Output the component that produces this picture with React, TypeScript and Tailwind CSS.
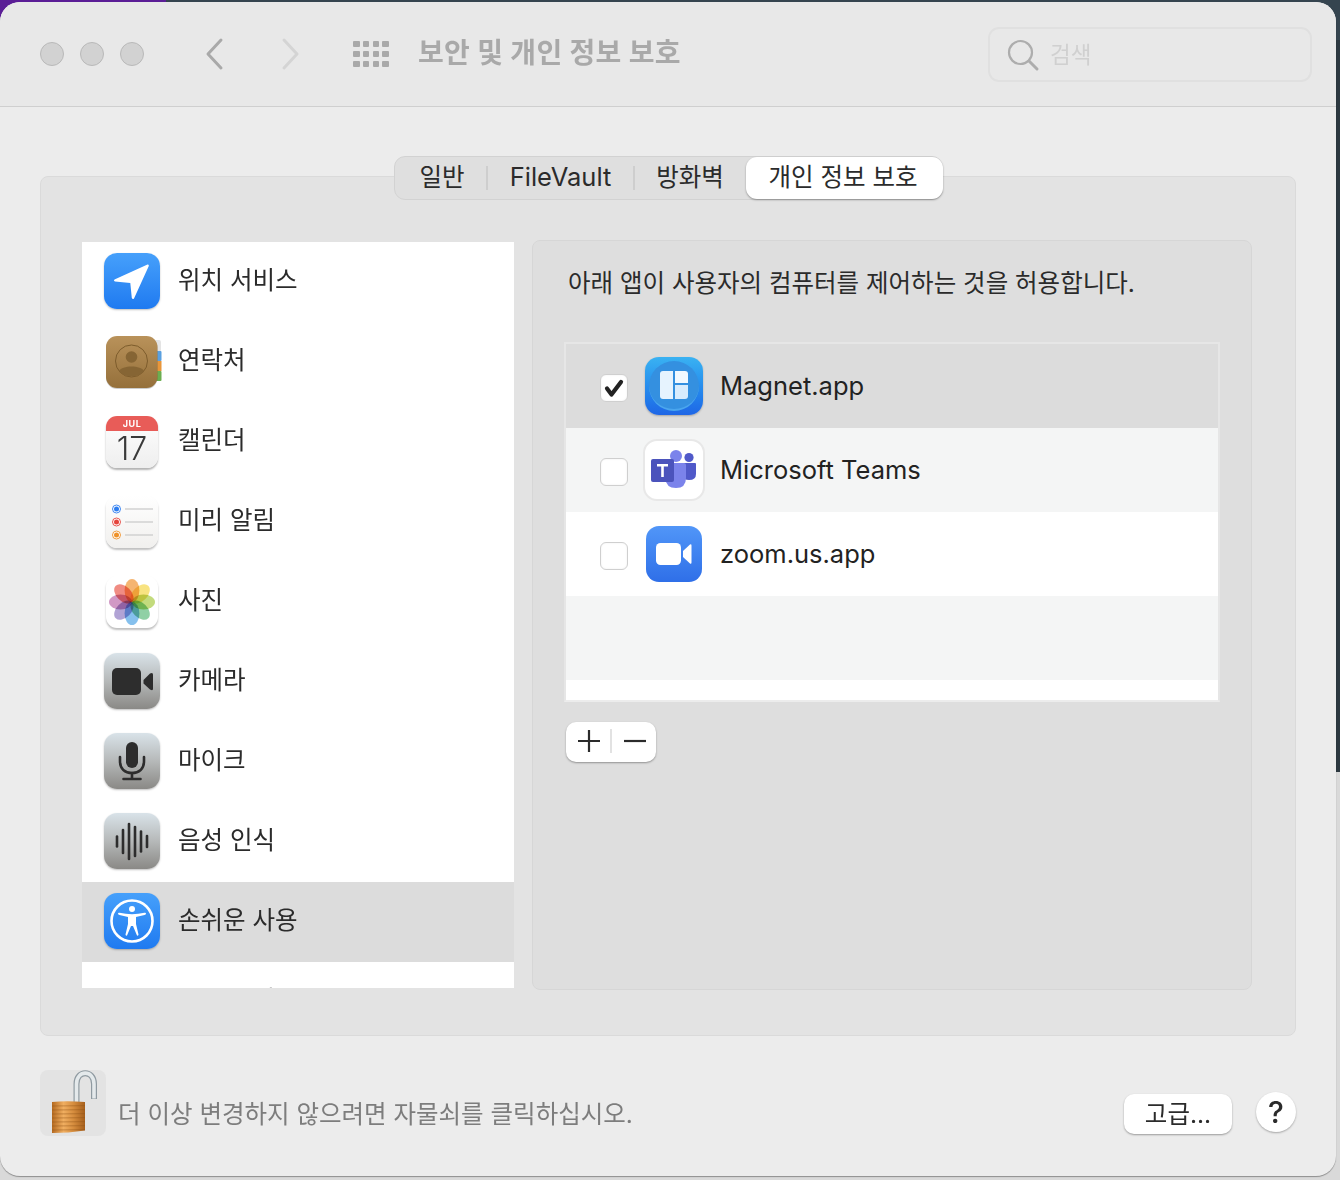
import React from "react";

const font = { fontFamily: '"Inter", "Noto Sans CJK KR", sans-serif' };

function Squircle({ className, children }: { className: string; children?: React.ReactNode }) {
  return (
    <div className={`w-14 h-14 rounded-[13px] flex items-center justify-center shadow-[0_1px_2px_rgba(0,0,0,0.25)] ${className}`}>
      {children}
    </div>
  );
}

const blue = "bg-gradient-to-b from-[#46a0fb] to-[#1f7af0]";
const gray = "bg-gradient-to-b from-[#d9e3e9] via-[#b6b9b9] to-[#8a8986]";

const LocationIcon = () => (
  <Squircle className={blue}>
    <svg width="56" height="56" viewBox="0 0 56 56">
      <path d="M43.5 11.5 L10.5 26.5 Q9 27.8 11 28.6 L26.3 30 L27.8 45 Q28.8 47 30 45.4 L44.8 13 Q45 11 43.5 11.5 Z" fill="#fff" />
    </svg>
  </Squircle>
);

const ContactsIcon = () => (
  <div className="w-14 h-14 flex items-center justify-center pt-[2px]">
    <svg width="56" height="56" viewBox="0 0 56 56" className="overflow-visible">
      <defs>
        <linearGradient id="ct" x1="0" y1="0" x2="0" y2="1">
          <stop offset="0" stopColor="#b9925a" />
          <stop offset="1" stopColor="#95703b" />
        </linearGradient>
      </defs>
      <rect x="46" y="6" width="11" height="12" rx="2" fill="#e4e4e4" />
      <rect x="50" y="17" width="7.5" height="10" rx="1" fill="#5aa0e0" />
      <rect x="50" y="27" width="7.5" height="10" fill="#e8963a" />
      <rect x="50" y="37" width="7.5" height="10" rx="1" fill="#6cae50" />
      <rect x="2" y="3" width="51.5" height="52" rx="11" fill="#00000033" />
      <rect x="2" y="2" width="51.5" height="52" rx="11" fill="url(#ct)" />
      <circle cx="27.5" cy="27" r="16" fill="none" stroke="#7d5c2c" strokeWidth="1" />
      <circle cx="27.5" cy="23" r="5.8" fill="#866534" />
      <path d="M15 37 C18 31 37 31 40 37 C36 44 19 44 15 37 Z" fill="#866534" />
    </svg>
  </div>
);

const CalendarIcon = () => (
  <div className="w-14 h-14 flex items-center justify-center pt-[2px]">
    <div className="w-[52px] h-[52px] rounded-[11px] overflow-hidden flex flex-col bg-gradient-to-b from-white to-[#eeeeee] shadow-[0_2px_2px_rgba(0,0,0,0.3)]">
      <div className="h-[15px] bg-[#e85c58] flex items-center justify-center text-white text-[9px] font-bold tracking-[0.5px] leading-none">JUL</div>
      <div className="flex-1 flex items-center justify-center text-[32px] leading-none text-[#3a3a3a] font-light pb-[1px]">17</div>
    </div>
  </div>
);

const RemindersIcon = () => {
  const rows: [number, string][] = [[13, "#2c7df0"], [26, "#e5443c"], [39, "#ee922a"]];
  return (
    <div className="w-14 h-14 flex items-center justify-center pt-[2px]">
      <div className="w-[52px] h-[52px] rounded-[11px] bg-gradient-to-b from-white to-[#f1f0ee] shadow-[0_2px_2px_rgba(0,0,0,0.25)]">
        <svg width="52" height="52" viewBox="0 0 52 52">
          {rows.map(([y, c]) => (
            <g key={y}>
              <circle cx="10.5" cy={y} r="4" fill="#fff" stroke={c} strokeWidth="0.9" />
              <circle cx="10.5" cy={y} r="2.5" fill={c} />
              <rect x="19" y={y - 0.7} width="28" height="1.4" fill="#cfcfcf" />
            </g>
          ))}
        </svg>
      </div>
    </div>
  );
};

const PhotosIcon = () => {
  const petals = ["#f2a24e", "#f6dc62", "#b4d25c", "#74c48e", "#66b0e8", "#9d8ccb", "#c680b6", "#ec6f64"];
  return (
    <div className="w-14 h-14 flex items-center justify-center pt-[2px]">
      <div className="w-[52px] h-[52px] rounded-[11px] bg-white shadow-[0_2px_2px_rgba(0,0,0,0.25)]">
        <svg width="52" height="52" viewBox="0 0 52 52">
          {petals.map((c, i) => (
            <ellipse key={c} className="mix-blend-multiply" cx="26" cy="14.5" rx="7.4" ry="11.5" fill={c} fillOpacity="0.8" transform={`rotate(${i * 45} 26 26)`} />
          ))}
        </svg>
      </div>
    </div>
  );
};

const CameraGlyph = () => (
  <svg width="56" height="56" viewBox="0 0 56 56">
    <rect x="8" y="15" width="29" height="27" rx="5" fill="#2d2d2d" />
    <path d="M39.5 27 L46 20.5 Q49 19 49 21.5 L49 36 Q49 38 46 36.5 L39.5 30.5 Z" fill="#2d2d2d" />
  </svg>
);

const MicGlyph = () => (
  <svg width="56" height="56" viewBox="0 0 56 56" fill="none" stroke="#2d2d2d" strokeLinecap="round">
    <rect x="22" y="9" width="12" height="26" rx="6" fill="#2d2d2d" stroke="none" />
    <path d="M16 24 V28 C16 36 21 40 28 40 C35 40 40 36 40 28 V24" strokeWidth="2.6" />
    <path d="M28 40 V46 M19.5 46 H36.5" strokeWidth="2.6" />
  </svg>
);

const VoiceGlyph = () => {
  const bars: [number, number][] = [[13, 10], [19, 23], [25, 35], [31, 29], [37, 20], [43, 11]];
  return (
    <svg width="56" height="56" viewBox="0 0 56 56" stroke="#2d2d2d" strokeWidth="2.6" strokeLinecap="round">
      {bars.map(([x, h]) => (
        <line key={x} x1={x} x2={x} y1={28.5 - h / 2} y2={28.5 + h / 2} />
      ))}
    </svg>
  );
};

const AccessGlyph = () => (
  <svg width="56" height="56" viewBox="0 0 56 56">
    <circle cx="28" cy="28" r="20.5" fill="none" stroke="#fff" strokeWidth="2.6" />
    <circle cx="28" cy="16" r="3" fill="#fff" />
    <path d="M14 20.5 Q14 19.5 15.5 19.8 Q28 22.5 40.5 19.8 Q42 19.5 42 20.5 Q42 21.8 40.5 22 L32 24 L32 31 L34.5 41.5 Q34.5 43 33 42.5 L29 33 L27 33 L23 42.5 Q21.5 43 21.5 41.5 L24 31 L24 24 L15.5 22 Q14 21.8 14 20.5 Z" fill="#fff" />
  </svg>
);

const items: { label: string; icon: React.ReactNode; selected?: boolean }[] = [
  { label: "위치 서비스", icon: <LocationIcon /> },
  { label: "연락처", icon: <ContactsIcon /> },
  { label: "캘린더", icon: <CalendarIcon /> },
  { label: "미리 알림", icon: <RemindersIcon /> },
  { label: "사진", icon: <PhotosIcon /> },
  { label: "카메라", icon: <Squircle className={gray}><CameraGlyph /></Squircle> },
  { label: "마이크", icon: <Squircle className={gray}><MicGlyph /></Squircle> },
  { label: "음성 인식", icon: <Squircle className={gray}><VoiceGlyph /></Squircle> },
  { label: "손쉬운 사용", icon: <Squircle className={blue}><AccessGlyph /></Squircle>, selected: true },
  { label: "입력 모니터링", icon: <div className="w-14 h-14" /> },
];

const MagnetIcon = () => (
  <div className="w-[58px] h-[58px] rounded-[14px] bg-gradient-to-b from-[#3ab2f2] to-[#1f66e6] flex items-center justify-center shadow-[0_1px_2px_rgba(0,0,0,0.25)]">
    <div className="w-[50px] h-[50px] rounded-full bg-[#3490e0] flex items-center justify-center border-b-2 border-[#4aa6ee]">
      <svg width="28" height="28" viewBox="0 0 28 28">
        <path d="M3 0 H13 V28 H3 Q0 28 0 25 V3 Q0 0 3 0 Z" fill="#e6f3fe" />
        <path d="M15 0 H25 Q28 0 28 3 V12 H15 Z" fill="#f2f9ff" />
        <path d="M15 14 H28 V25 Q28 28 25 28 H15 Z" fill="#d8ecfd" />
      </svg>
    </div>
  </div>
);

const TeamsIcon = () => (
  <div className="w-[62px] h-[62px] rounded-[14px] bg-white border-2 border-[#e8e8e8] flex items-center justify-center">
    <svg width="46" height="40" viewBox="0 0 46 40">
      <circle cx="25" cy="6" r="6" fill="#7b83eb" />
      <circle cx="38" cy="7.5" r="4.6" fill="#5059c9" />
      <path d="M31 13 H44 Q45 13 45 14 V24 Q45 30 38 30 Q33 30 31 27 Z" fill="#5059c9" />
      <path d="M14 13 H33 Q35 13 35 15 V28 Q35 38 25 38 Q15 38 14 28 Z" fill="#7b83eb" />
      <rect x="0" y="9" width="23" height="23" rx="2" fill="#4b53bc" />
      <path d="M6 14 H17 V16.4 H12.8 V27 H10.2 V16.4 H6 Z" fill="#fff" />
    </svg>
  </div>
);

const ZoomIcon = () => (
  <div className="w-14 h-14 rounded-[13px] bg-gradient-to-b from-[#5196f8] to-[#2f6fe8] flex items-center justify-center">
    <svg width="36" height="22" viewBox="0 0 36 22">
      <rect x="0" y="0" width="25" height="22" rx="4.5" fill="#fff" />
      <path d="M27 8 L34 1.5 Q35.5 0.8 35.5 2.5 L35.5 19.5 Q35.5 21.2 34 20.5 L27 14 Z" fill="#fff" />
    </svg>
  </div>
);

function Checkbox({ checked }: { checked?: boolean }) {
  return (
    <div className="w-7 h-7 rounded-[6px] bg-white border border-[#cfcfcf] shadow-[inset_0_0_2px_rgba(0,0,0,0.08)] flex items-center justify-center">
      {checked && (
        <svg width="22" height="22" viewBox="0 0 22 22" fill="none" stroke="#222" strokeWidth="4.2" strokeLinecap="round" strokeLinejoin="round">
          <path d="M4 11.5 L8.5 17.5 L18 5" />
        </svg>
      )}
    </div>
  );
}

const apps: { name: string; icon: React.ReactNode; bg: string; checked?: boolean }[] = [
  { name: "Magnet.app", icon: <MagnetIcon />, bg: "bg-[#dcdcdc]", checked: true },
  { name: "Microsoft Teams", icon: <TeamsIcon />, bg: "bg-[#f4f5f5]" },
  { name: "zoom.us.app", icon: <ZoomIcon />, bg: "bg-white" },
];

const LockIcon = () => (
  <svg width="66" height="66" viewBox="0 0 66 66">
    <defs>
      <linearGradient id="bd" x1="0" y1="0" x2="1" y2="0">
        <stop offset="0" stopColor="#b56a20" />
        <stop offset="0.35" stopColor="#f0ae60" />
        <stop offset="0.65" stopColor="#d68d3e" />
        <stop offset="1" stopColor="#a65f1c" />
      </linearGradient>
    </defs>
    <path d="M36.5 33 V14 C36.5 -0.5 54 -0.5 54 14 V29" fill="none" stroke="#8f9aa1" strokeWidth="6" />
    <path d="M36.5 33 V14 C36.5 -0.5 54 -0.5 54 14 V28.5" fill="none" stroke="#e4e9eb" strokeWidth="3.6" />
    <path d="M12 32 Q26 30.5 45 32 V60.5 Q28 63 12 63 Z" fill="url(#bd)" />
    {[36, 40, 44, 48, 52, 56, 60].map((y) => (
      <line key={y} x1="12" x2="45" y1={y} y2={y - 0.3} stroke="#8f5217" strokeOpacity="0.45" strokeWidth="1" />
    ))}
  </svg>
);

export default function App() {
  return (
    <div
      style={font}
      className="w-[1340px] h-[1180px] overflow-hidden [background:linear-gradient(90deg,#5b1e96_166px,#35444f_166px)_top/100%_40px_no-repeat,linear-gradient(#2c3840_772px,#d9d9d9_772px)] pt-[2px]"
    >
      <div className="w-[1336px] h-[1174px] rounded-[20px] overflow-hidden bg-[#ececec] flex flex-col shadow-[0_1px_1px_rgba(0,0,0,0.35)]">
        {/* Title bar */}
        <div className="h-[105px] shrink-0 bg-[#e8e8e8] border-b border-[#cfcfcf] flex items-center pl-10 pr-[24px]">
          <div className="flex gap-4">
            {[0, 1, 2].map((i) => (
              <div key={i} className="w-6 h-6 rounded-full bg-[#d2d2d2] border border-[#b9b9b9]" />
            ))}
          </div>
          <svg className="ml-[60px]" width="22" height="34" viewBox="0 0 22 34" fill="none" stroke="#a9a9a9" strokeWidth="3" strokeLinecap="round" strokeLinejoin="round">
            <path d="M17 3 L4 17 L17 31" />
          </svg>
          <svg className="ml-[53px]" width="22" height="34" viewBox="0 0 22 34" fill="none" stroke="#d4d4d4" strokeWidth="3" strokeLinecap="round" strokeLinejoin="round">
            <path d="M5 3 L18 17 L5 31" />
          </svg>
          <div className="ml-[52px] grid grid-cols-4 gap-x-[3px] gap-y-[4px] w-9">
            {Array.from({ length: 12 }).map((_, i) => (
              <div key={i} className="w-[6.5px] h-[6px] rounded-[1px] bg-[#a9a9a9]" />
            ))}
          </div>
          <div className="ml-[29px] mb-[2px] text-[28px] font-bold text-[#a9a9a9] leading-none tracking-[0.35px]">보안 및 개인 정보 보호</div>
          <div className="ml-auto mt-[1px] w-[324px] h-[55px] rounded-[11px] border-2 border-[#e0e0e0] flex items-center pl-4">
            <svg width="34" height="34" viewBox="0 0 34 34" fill="none" stroke="#adadad" strokeLinecap="round">
              <circle cx="14.5" cy="14.5" r="11.5" strokeWidth="2.2" />
              <path d="M23 23 L31 31" strokeWidth="3" />
            </svg>
            <span className="ml-[10px] mt-[2px] text-[22.5px] text-[#d0d0d0] leading-none">검색</span>
          </div>
        </div>

        {/* Body */}
        <div className="flex-1 flex flex-col px-10 pt-[69px]">
          <div className="relative w-[1256px] h-[860px] shrink-0 rounded-[8px] border border-[#dadada] bg-[#e3e3e3] pl-[41px] pr-[43px] pt-[64px] flex gap-[18px]">
            {/* Tabs */}
            <div className="absolute left-[353px] top-[-21px] w-[549px] h-[44px] rounded-[11px] bg-[#dfdfdf] border border-[#d2d2d2] flex items-center text-[24.5px] text-[#2b2b2b] leading-none">
              <div className="w-[91px] text-center pl-[3px] pb-[2px]">일반</div>
              <div className="w-[2px] h-6 bg-[#cecece]" />
              <div className="w-[145px] text-center text-[25.5px] pb-[2px]">FileVault</div>
              <div className="w-[2px] h-6 bg-[#cecece]" />
              <div className="w-[110px] text-center pb-[2px]">방화벽</div>
              <div className="ml-auto -mr-px w-[197px] h-[42px] rounded-[11px] bg-white shadow-[0_1px_2px_rgba(0,0,0,0.35)] flex items-center justify-center pb-[2px] pr-[3px]">개인 정보 보호</div>
            </div>

            {/* Left list */}
            <div className="w-[432px] h-[746px] mt-[1px] bg-white overflow-hidden shrink-0">
              {items.map((it) => (
                <div
                  key={it.label}
                  className={`h-20 flex items-center pl-[22px] gap-[18px] ${it.selected ? "bg-[#dcdcdc]" : ""}`}
                >
                  <div className="-mt-[3px]">{it.icon}</div>
                  <span className="text-[24.5px] leading-none text-[#2b2b2b] -mt-[3px]">{it.label}</span>
                </div>
              ))}
            </div>

            {/* Right panel */}
            <div className="w-[720px] h-[750px] -mt-[1px] rounded-[8px] border border-[#d6d6d6] bg-[#dedede] pl-[32px] pt-[27px]">
              <div className="pl-[3px] text-[24.5px] leading-[30px] text-[#2b2b2b]">아래 앱이 사용자의 컴퓨터를 제어하는 것을 허용합니다.</div>
              <div className="mt-[44px] -ml-px w-[656px] h-[360px] border-2 border-[#e6e6e6] border-b-[#ececec] bg-white">
                {apps.map((a) => (
                  <div key={a.name} className={`h-[84px] flex items-center ${a.bg}`}>
                    <div className="ml-[34px] mt-[4px]"><Checkbox checked={a.checked} /></div>
                    <div className="w-[92px] flex justify-center">{a.icon}</div>
                    <span className="text-[25.5px] leading-none text-[#222]">{a.name}</span>
                  </div>
                ))}
                <div className="h-[84px] bg-[#f4f5f5]" />
              </div>
              <div className="mt-[20px] ml-px w-[90px] h-10 rounded-[10px] bg-white shadow-[0_1px_2px_rgba(0,0,0,0.35)] flex items-center pb-[2px]">
                <svg className="ml-[12px]" width="22" height="22" viewBox="0 0 22 22" stroke="#2b2b2b" strokeWidth="2.2">
                  <path d="M0 11 H22 M11 0 V22" />
                </svg>
                <div className="ml-[10px] w-[2px] h-6 bg-[#e2e2e2]" />
                <svg className="ml-[12px]" width="22" height="22" viewBox="0 0 22 22" stroke="#2b2b2b" strokeWidth="2.2">
                  <path d="M0 11 H22" />
                </svg>
              </div>
            </div>
          </div>

          {/* Footer */}
          <div className="flex items-center mt-[34px]">
            <div className="w-[66px] h-[66px] rounded-[8px] bg-[#e3e3e3]"><LockIcon /></div>
            <span className="ml-3 mt-[22px] text-[24.5px] leading-none text-[#7d7d7d]">더 이상 변경하지 않으려면 자물쇠를 클릭하십시오.</span>
            <div className="ml-auto mt-[22px] w-[108px] h-10 rounded-[10px] bg-white shadow-[0_1px_2px_rgba(0,0,0,0.35)] flex items-center justify-center text-[24.5px] leading-none text-[#2b2b2b]">고급...</div>
            <div className="ml-[24px] mt-[18px] w-10 h-10 rounded-full bg-white shadow-[0_1px_2px_rgba(0,0,0,0.3)] flex items-center justify-center text-[30px] font-medium leading-none text-[#2b2b2b]">?</div>
          </div>
        </div>
      </div>
    </div>
  );
}
